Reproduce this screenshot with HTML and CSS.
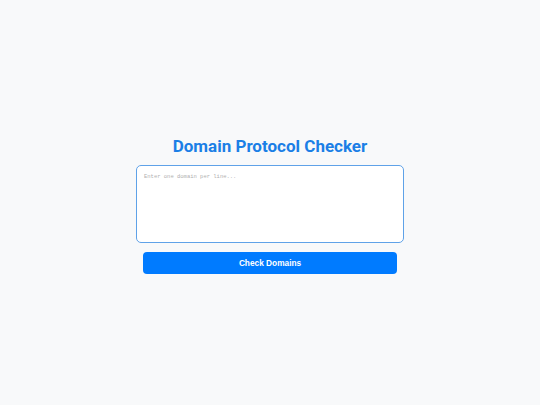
FILE: index.html
```
<!DOCTYPE html>
<html>
<head>
<meta charset="utf-8">
<link rel="stylesheet" href="styles.css">
</head>
<body>
<div class="page">
  <div class="container">
    <h1 class="title">Domain Protocol Checker</h1>
    <textarea class="domains" placeholder="Enter one domain per line..."></textarea>
    <button class="check">Check Domains</button>
  </div>
</div>
</body>
</html>
```
FILE: styles.css
```
html, body {
  margin: 0;
  padding: 0;
  background: #f8f9fa;
}
.page {
  width: 540px;
  height: 405px;
  display: flex;
  align-items: center;
  justify-content: center;
  padding-top: 2px;
  box-sizing: border-box;
}
.container {
  width: 268px;
  display: flex;
  flex-direction: column;
  align-items: center;
}
.title {
  margin: 0 0 7px 0;
  font-family: Roboto, "Liberation Sans", sans-serif;
  font-weight: 700;
  font-size: 17px;
  line-height: 24px;
  color: #1b7fe6;
}
.domains {
  box-sizing: border-box;
  width: 268px;
  height: 78px;
  margin: 0;
  padding: 7px 7px;
  border: 1.5px solid #5fa2e8;
  border-radius: 5px;
  background: #fff;
  font-family: "Liberation Mono", monospace;
  font-size: 5.5px;
  resize: none;
  outline: none;
}
.domains::placeholder {
  color: #b0b0b0;
}
.check {
  box-sizing: border-box;
  width: 254px;
  height: 22px;
  margin-top: 9px;
  border: none;
  border-radius: 4px;
  background: #007bff;
  color: #fff;
  font-family: "Liberation Sans", Arial, sans-serif;
  font-weight: 700;
  font-size: 8.3px;
  padding: 0;
}
```
